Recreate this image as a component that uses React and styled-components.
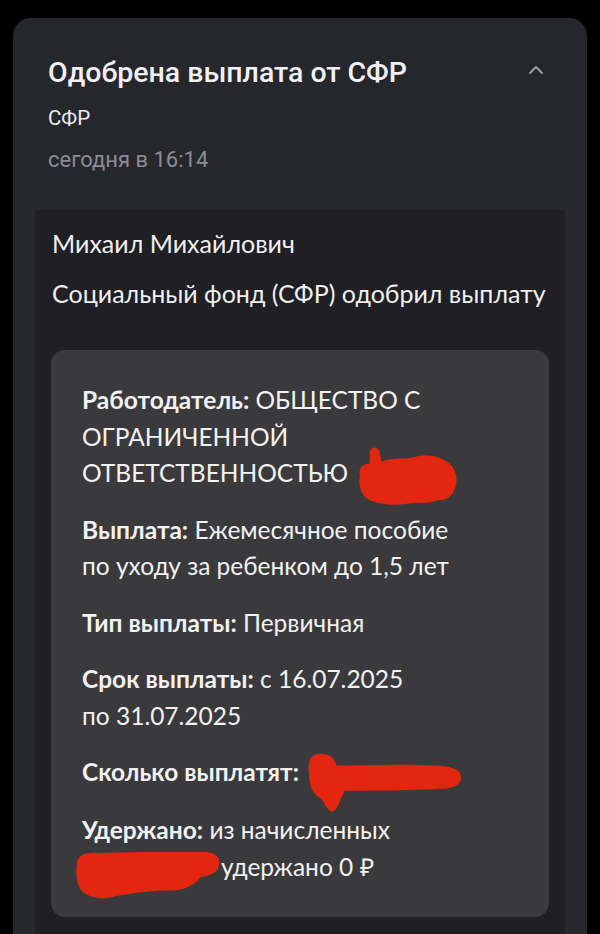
import React from "react";
import styled, { createGlobalStyle } from "styled-components";

const GlobalStyle = createGlobalStyle`
  html, body {
    margin: 0;
    padding: 0;
    background: #000;
  }
  body {
    font-family: Roboto, "Noto Sans", sans-serif;
    -webkit-font-smoothing: antialiased;
  }
`;

const Page = styled.div`
  padding: 18px 13px 0;
  box-sizing: border-box;
  overflow: hidden;
  height: 934px;
`;

const Card = styled.section`
  background: #26262d;
  border-radius: 18px 18px 0 0;
  padding: 39px 22px 0;
  min-height: 940px;
  box-sizing: border-box;
`;

const Header = styled.header`
  display: flex;
  align-items: flex-start;
  justify-content: space-between;
  padding: 0 13px;
`;

const HeaderText = styled.div`
  display: flex;
  flex-direction: column;
`;

const Title = styled.h1`
  margin: 0;
  font-family: Roboto, sans-serif;
  font-weight: 500;
  font-size: 28.5px;
  line-height: 32px;
  color: #f1f1f4;
`;

const Sender = styled.div`
  margin-top: 15px;
  font-family: Roboto, sans-serif;
  font-size: 20.5px;
  line-height: 28px;
  color: #ececef;
`;

const Time = styled.div`
  margin-top: 14px;
  font-family: Roboto, sans-serif;
  font-size: 22px;
  line-height: 28px;
  color: #8b8c96;
`;

const Chevron = styled.button`
  border: 0;
  background: transparent;
  padding: 0;
  margin: 8px 8px 0 0;
  display: flex;
  color: #9c9da8;
`;

const Body = styled.div`
  margin-top: 36px;
  background: #1f1f24;
  padding: 18px 16px 40px;
  min-height: 800px;
  font-family: Lato, "Open Sans", sans-serif;
  color: #f0f0f0;
`;

const Greeting = styled.p`
  margin: 0;
  padding-left: 1px;
  font-size: 25px;
  line-height: 30px;
`;

const Message = styled.p`
  margin: 20px 0 0;
  padding-left: 1px;
  font-size: 25px;
  line-height: 30px;
`;

const InfoBox = styled.div`
  margin-top: 42px;
  background: #3a3a3c;
  border-radius: 14px;
  padding: 32px 75px 32px 31px;
  display: flex;
  flex-direction: column;
  gap: 20px;
`;

const Field = styled.p`
  margin: 0;
  font-size: 24.5px;
  line-height: 36.5px;
  color: #f2f2f2;
`;

const Label = styled.b`
  font-weight: 700;
`;

const NoWrap = styled.span`
  white-space: nowrap;
`;

const Blot = styled.svg`
  display: inline-block;
  vertical-align: middle;
  margin: ${(p) => p.$margin || "0"};
`;

const RED = "#e3260f";

const BLOTS = {
  a: {
    box: "0 0 104 62",
    d: "M4 30 C2 22 8 18 14 18 L14 6 C16 0 22 0 24 6 L26 16 C36 12 48 14 58 12 C70 8 84 10 92 16 C100 20 104 30 102 40 C100 50 94 56 84 56 C72 60 60 58 50 60 C38 62 24 60 14 56 C6 52 2 42 4 30 Z",
  },
  b: {
    box: "0 0 160 62",
    d: "M4 20 C2 8 8 0 18 2 C26 2 30 8 32 14 C60 14 100 12 130 14 C148 14 158 18 158 26 C158 34 150 38 136 38 C100 40 70 40 40 40 C36 48 34 58 28 62 C22 60 20 52 16 48 C8 44 4 36 4 20 Z",
  },
  c: {
    box: "0 0 146 52",
    d: "M2 14 C2 6 10 2 22 3 C50 2 90 2 130 2 C140 2 146 8 144 16 C142 24 136 26 126 28 C120 36 110 42 96 42 C80 42 60 44 40 48 C28 52 16 50 8 44 C2 38 0 26 2 14 Z",
  },
};

function Redact({ variant, width, height, margin }) {
  const b = BLOTS[variant];
  return (
    <Blot
      $margin={margin}
      width={width}
      height={height}
      viewBox={b.box}
      preserveAspectRatio="none"
      aria-hidden="true"
    >
      <path d={b.d} fill={RED} />
    </Blot>
  );
}

export default function App() {
  return (
    <>
      <GlobalStyle />
      <Page>
        <Card>
          <Header>
            <HeaderText>
              <Title>Одобрена выплата от СФР</Title>
              <Sender>СФР</Sender>
              <Time>сегодня в 16:14</Time>
            </HeaderText>
            <Chevron aria-label="Свернуть">
              <svg width="16" height="10" viewBox="0 0 16 10" fill="none">
                <polyline
                  points="2,8 8,2 14,8"
                  stroke="currentColor"
                  strokeWidth="2"
                  strokeLinecap="round"
                  strokeLinejoin="round"
                />
              </svg>
            </Chevron>
          </Header>
          <Body>
            <Greeting>Михаил Михайлович</Greeting>
            <Message>Социальный фонд (СФР) одобрил выплату</Message>
            <InfoBox>
              <Field>
                <Label>Работодатель:</Label> ОБЩЕСТВО С ОГРАНИЧЕННОЙ{" "}
                <NoWrap>
                  ОТВЕТСТВЕННОСТЬЮ
                  <Redact variant="a" width={102} height={60} margin="-14px 0 -14px 8px" />
                </NoWrap>
              </Field>
              <Field>
                <Label>Выплата:</Label> Ежемесячное пособие по уходу за ребенком до 1,5 лет
              </Field>
              <Field>
                <Label>Тип выплаты:</Label> Первичная
              </Field>
              <Field>
                <Label>Срок выплаты:</Label> с 16.07.2025
                <br />
                по 31.07.2025
              </Field>
              <Field>
                <NoWrap>
                  <Label>Сколько выплатят:</Label>
                  <Redact variant="b" width={158} height={60} margin="-6px 0 -20px 6px" />
                </NoWrap>
              </Field>
              <Field>
                <Label>Удержано:</Label> из начисленных
                <br />
                <Redact variant="c" width={146} height={50} margin="-4px 0 -16px -7px" />
                удержано 0 ₽
              </Field>
            </InfoBox>
          </Body>
        </Card>
      </Page>
    </>
  );
}
